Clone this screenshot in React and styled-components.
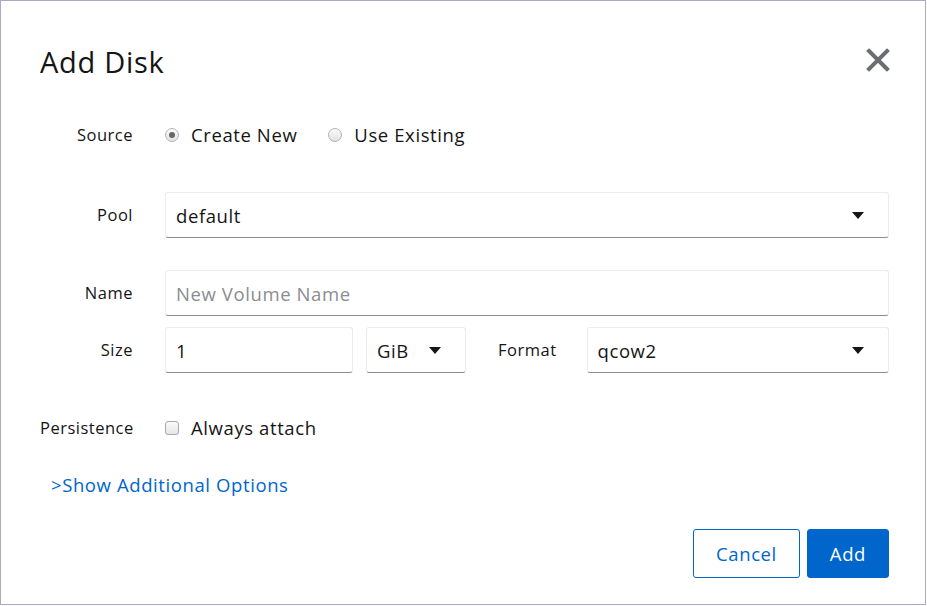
import React from 'react';
import styled, { createGlobalStyle } from 'styled-components';

const GlobalStyle = createGlobalStyle`
  html, body {
    margin: 0;
    padding: 0;
    background: #fff;
  }
  body {
    font-family: 'Open Sans', 'Liberation Sans', sans-serif;
    color: #151515;
  }
`;

const Dialog = styled.div`
  box-sizing: border-box;
  width: 926px;
  height: 605px;
  border: 1px solid #aaa8c2;
  background: #fff;
  padding: 0 36px 0 39px;
  display: flex;
  flex-direction: column;
`;

const Header = styled.div`
  display: flex;
  align-items: flex-start;
  justify-content: space-between;
  height: 79px;
`;

const Title = styled.h1`
  margin: 43px 0 0;
  font-size: 29px;
  font-weight: 500;
  line-height: 36px;
  letter-spacing: 0.7px;
`;

const CloseButton = styled.button`
  border: 0;
  background: none;
  padding: 0;
  margin: 47px -1px 0 0;
  width: 24px;
  height: 24px;
  display: flex;
  align-items: center;
  justify-content: center;
  cursor: pointer;
`;

const Row = styled.div`
  display: grid;
  grid-template-columns: 93px 1fr;
  column-gap: 32px;
  align-items: center;
  margin-top: ${(p) => p.$gap}px;
  height: ${(p) => p.$height || 24}px;
`;

const Label = styled.label`
  font-size: 16.5px;
  line-height: 24px;
  letter-spacing: 0.5px;
  text-align: right;
  white-space: nowrap;
`;

const Choices = styled.div`
  display: flex;
  align-items: center;
  gap: 31px;
`;

const Choice = styled.span`
  display: inline-flex;
  align-items: center;
  gap: 12px;
  font-size: 18.5px;
  line-height: 24px;
  letter-spacing: 0.6px;
`;

const Radio = styled.span`
  box-sizing: border-box;
  width: 14px;
  height: 14px;
  border-radius: 50%;
  border: 1px solid #b3b3b3;
  background: linear-gradient(#fbfbfb, #e2e2e2);
  display: inline-flex;
  align-items: center;
  justify-content: center;
  &::after {
    content: '';
    width: 6px;
    height: 6px;
    border-radius: 50%;
    background: ${(p) => (p.$checked ? '#666' : 'transparent')};
  }
`;

const Checkbox = styled.span`
  box-sizing: border-box;
  width: 14px;
  height: 14px;
  border-radius: 3px;
  border: 1px solid #a8a8a8;
  background: linear-gradient(#fafafa, #e6e6e6);
`;

const Field = styled.div`
  box-sizing: border-box;
  height: 46px;
  width: ${(p) => (p.$width ? `${p.$width}px` : 'auto')};
  flex: ${(p) => (p.$width ? 'none' : '1')};
  margin-left: ${(p) => p.$offset || 0}px;
  border: 1px solid #ececec;
  border-bottom-color: #8a8d90;
  border-radius: 3px;
  padding: 0 24px 0 10px;
  display: flex;
  align-items: center;
  justify-content: space-between;
  font-size: 18.5px;
  letter-spacing: 0.6px;
  background: #fff;
`;

const TextInput = styled.input`
  box-sizing: border-box;
  height: 46px;
  width: ${(p) => (p.$width ? `${p.$width}px` : '100%')};
  border: 1px solid #ececec;
  border-bottom-color: #8a8d90;
  border-radius: 3px;
  padding: 0 10px;
  font-family: inherit;
  font-size: 18.5px;
  letter-spacing: 0.6px;
  color: #151515;
  outline: none;
  &::placeholder {
    color: #8a8d90;
  }
`;

const Caret = styled.span`
  width: 0;
  height: 0;
  border-left: 6px solid transparent;
  border-right: 6px solid transparent;
  border-top: 7px solid #151515;
`;

const SizeControls = styled.div`
  display: flex;
  align-items: center;
`;

const InlineLabel = styled(Label)`
  margin: 0 30px 0 32px;
`;

const Link = styled.a`
  display: block;
  margin: 33px 0 0 11px;
  font-size: 18.5px;
  letter-spacing: 0.6px;
  line-height: 24px;
  color: #0066cc;
  text-decoration: none;
`;

const Footer = styled.div`
  display: flex;
  justify-content: flex-end;
  gap: 7px;
  margin-top: 32px;
`;

const Button = styled.button`
  box-sizing: border-box;
  height: 49px;
  padding: 0 22px;
  border-radius: 3px;
  border: 1px solid #0066cc;
  font-family: inherit;
  font-size: 18.5px;
  letter-spacing: 0.6px;
  background: ${(p) => (p.$primary ? '#0066cc' : '#fff')};
  color: ${(p) => (p.$primary ? '#fff' : '#0066cc')};
  cursor: pointer;
`;

const CloseIcon = () => (
  <svg width="24" height="24" viewBox="0 0 24 24">
    <path d="M3 3 L21 21 M21 3 L3 21" stroke="#6a6e73" strokeWidth="4" strokeLinecap="square" fill="none" />
  </svg>
);

const Select = ({ value, width, offset }) => (
  <Field $width={width} $offset={offset}>
    <span>{value}</span>
    <Caret />
  </Field>
);

export default function App() {
  return (
    <>
      <GlobalStyle />
      <Dialog>
        <Header>
          <Title>Add Disk</Title>
          <CloseButton aria-label="Close">
            <CloseIcon />
          </CloseButton>
        </Header>

        <Row $gap={43}>
          <Label>Source</Label>
          <Choices>
            <Choice>
              <Radio $checked />
              Create New
            </Choice>
            <Choice>
              <Radio />
              Use Existing
            </Choice>
          </Choices>
        </Row>

        <Row $gap={45} $height={46}>
          <Label>Pool</Label>
          <Select value="default" />
        </Row>

        <Row $gap={32} $height={46}>
          <Label>Name</Label>
          <TextInput placeholder="New Volume Name" />
        </Row>

        <Row $gap={11} $height={46}>
          <Label>Size</Label>
          <SizeControls>
            <TextInput $width={188} defaultValue="1" />
            <Select value="GiB" width={100} offset={13} />
            <InlineLabel>Format</InlineLabel>
            <Select value="qcow2" />
          </SizeControls>
        </Row>

        <Row $gap={43}>
          <Label>Persistence</Label>
          <Choice>
            <Checkbox />
            Always attach
          </Choice>
        </Row>

        <Link href="#">&gt;Show Additional Options</Link>

        <Footer>
          <Button>Cancel</Button>
          <Button $primary>Add</Button>
        </Footer>
      </Dialog>
    </>
  );
}
